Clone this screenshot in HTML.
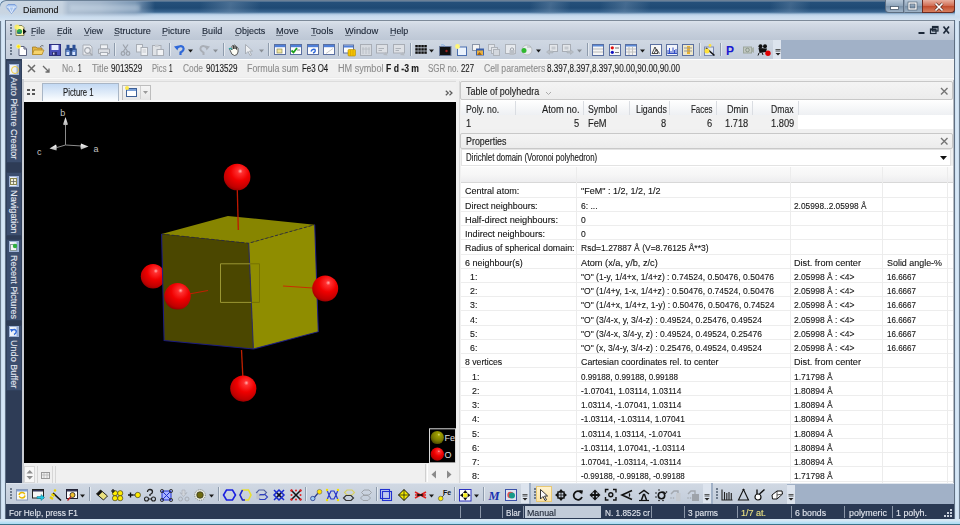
<!DOCTYPE html><html><head><meta charset="utf-8"><style>
html,body{margin:0;padding:0;width:960px;height:525px;overflow:hidden;background:#c3d5e8}
body{font-family:"Liberation Sans", sans-serif;position:relative}
.a{position:absolute}
.t{position:absolute;white-space:pre;line-height:1;transform-origin:0 0;-webkit-text-stroke:0.12px currentColor}
</style></head><body>
<div class="a" style="left:0px;top:0px;width:960px;height:525px;background:#cfe2f4"></div>
<div class="a" style="left:0px;top:20px;width:1px;height:505px;background:#6c7d8f"></div>
<div class="a" style="left:959px;top:20px;width:1px;height:505px;background:#6c7d8f"></div>
<div class="a" style="left:1px;top:20px;width:4px;height:500px;background:linear-gradient(90deg,#c4d8ec,#dcebf8 50%,#c8dcef)"></div>
<div class="a" style="left:955px;top:20px;width:4px;height:500px;background:linear-gradient(90deg,#c8dcef,#dcebf8 50%,#c4d8ec)"></div>
<div class="a" style="left:0;top:0;width:960px;height:21px;background:#cfe2f4;border-radius:7px 7px 0 0"></div><div class="a" style="left:0;top:0;width:955px;height:21px;background:linear-gradient(180deg,#5b6f84 0,#7d93aa 1px,#25507a 2px,#1f4a74 8px,#3a6690 12px,#9dbbd8 14px,#c9dcee 17px,#d8e6f3 20px);border-radius:6px 0 0 0"></div>
<div class="a" style="left:0;top:1px;width:160px;height:20px;background:linear-gradient(90deg,#c9d5e2 0,#c6d3e0 62px,#aebfd2 68px,#a3b6cb 100px,rgba(140,165,192,0.85) 135px,rgba(80,110,145,0) 155px);border-radius:6px 0 0 0"></div><div class="a" style="left:70px;top:5px;width:70px;height:6px;background:rgba(215,228,240,0.35);filter:blur(1.5px)"></div>
<div class="a" style="left:0;top:13px;width:960px;height:8px;background:linear-gradient(180deg,rgba(200,218,236,0) 0,#cadcee 4px,#d6e4f2 8px)"></div>
<div class="a" style="left:200px;top:2px;width:60px;height:12px;background:linear-gradient(100deg,rgba(120,150,180,0) 0,rgba(120,150,180,0.45) 50%,rgba(120,150,180,0) 100%)"></div>
<div class="a" style="left:530px;top:2px;width:40px;height:12px;background:linear-gradient(100deg,rgba(120,150,180,0) 0,rgba(120,150,180,0.4) 50%,rgba(120,150,180,0) 100%)"></div>
<div class="a" style="left:600px;top:2px;width:50px;height:12px;background:linear-gradient(100deg,rgba(120,150,180,0) 0,rgba(120,150,180,0.4) 50%,rgba(120,150,180,0) 100%)"></div>
<div class="a" style="left:770px;top:2px;width:40px;height:12px;background:linear-gradient(100deg,rgba(120,150,180,0) 0,rgba(120,150,180,0.35) 50%,rgba(120,150,180,0) 100%)"></div>

<div class="a" style="left:885px;top:0;width:19px;height:13px;border:1px solid #5c6e82;border-top:none;border-radius:0 0 0 4px;box-sizing:border-box;background:linear-gradient(180deg,#b9c9d9,#8ea4ba 50%,#7890a8 51%,#9fb4c8)"></div>
<div class="a" style="left:904px;top:0;width:18px;height:13px;border-bottom:1px solid #5c6e82;border-left:1px solid #8a9cb0;box-sizing:border-box;background:linear-gradient(180deg,#b9c9d9,#8ea4ba 50%,#7890a8 51%,#9fb4c8)"></div>
<div class="a" style="left:922px;top:0;width:33px;height:13px;border:1px solid #6b2a20;border-top:none;border-radius:0 0 4px 0;box-sizing:border-box;background:linear-gradient(180deg,#e8b0a0,#d06a50 50%,#c04a2c 51%,#d98060)"></div>
<svg class="a" style="left:885px;top:0" width="70" height="13">
<rect x="5.5" y="6.5" width="8" height="3" fill="#fff" stroke="#4a5a6c" stroke-width="0.8"/>
<rect x="24" y="3" width="7" height="6" fill="none" stroke="#4a5a6c" stroke-width="2.6"/>
<rect x="24" y="3" width="7" height="6" fill="none" stroke="#fff" stroke-width="1.3"/>
</svg>
<svg class="a" style="left:932px;top:2px" width="14" height="10"><path d="M3.5 1.5 L10.5 8.5 M10.5 1.5 L3.5 8.5" stroke="#5a2a20" stroke-width="3"/><path d="M3.5 1.5 L10.5 8.5 M10.5 1.5 L3.5 8.5" stroke="#fff" stroke-width="1.7"/></svg>

<svg class="a" style="left:5px;top:4px" width="13" height="10"><path d="M1 3 L3 0.5 L10 0.5 L12 3 L6.5 9.5 Z" fill="#a9c6f0" stroke="#6f94d6" stroke-width="0.8"/><path d="M1 3 H12 M4 3 L6.5 9 L9 3" stroke="#ffffff" stroke-width="0.6" fill="none"/></svg>
<div class="a" style="left:5px;top:20px;width:950px;height:499px;background:#5f6f82"></div>
<div class="a" style="left:6px;top:20px;width:948px;height:20px;background:linear-gradient(180deg,#7d8a99 0,#7d8a99 1px,#dce3ec 1px,#d2dae5 4px,#c6cfdc 60%,#bdc7d5 100%)"></div>
<div class="a" style="left:6px;top:40px;width:948px;height:19px;background:#a1b1c7"></div>
<div class="a" style="left:6px;top:40px;width:775px;height:19px;background:linear-gradient(180deg,#d0d8e3,#c2ccda)"></div>
<div class="a" style="left:773px;top:40px;width:8px;height:19px;background:#dde4ee"></div>
<div class="a" style="left:6px;top:59px;width:948px;height:20px;background:#f0f0f0"></div>
<div class="a" style="left:22px;top:59px;width:932px;height:1px;background:#ffffff"></div>
<div class="a" style="left:22px;top:77px;width:932px;height:4px;background:#ececec"></div>
<div class="a" style="left:22px;top:78px;width:932px;height:1px;background:#fafafa"></div>
<div class="a" style="left:6px;top:59px;width:16px;height:445px;background:#2e3c56"></div>
<div class="a" style="left:22px;top:79px;width:2px;height:404px;background:#c9cdd3"></div>
<div class="a" style="left:24px;top:81px;width:432px;height:21px;background:#f0f0f0"></div>
<div class="a" style="left:24px;top:81px;width:432px;height:1px;background:#dcdcdc"></div>
<div class="a" style="left:24px;top:100px;width:432px;height:2.4px;background:#f7f7f7"></div>
<div class="a" style="left:24px;top:102px;width:432px;height:361px;background:#000"></div>
<div class="a" style="left:24px;top:463px;width:432px;height:20px;background:#f0f0f0"></div>
<div class="a" style="left:456px;top:79px;width:4px;height:404px;background:#efefef"></div>
<div class="a" style="left:459px;top:81px;width:1px;height:402px;background:#d9d9d9"></div>
<div class="a" style="left:460px;top:79px;width:494px;height:404px;background:#f0f0f0"></div>
<div class="a" style="left:953px;top:80px;width:1px;height:403px;background:#b7bcc3"></div>
<div class="a" style="left:6px;top:482.5px;width:948px;height:1.5px;background:#dfe5ed"></div>
<div class="a" style="left:6px;top:484px;width:948px;height:20px;background:#a1b1c7"></div>
<div class="a" style="left:6px;top:484px;width:781px;height:20px;background:linear-gradient(180deg,#d0d8e3,#c2ccda)"></div>
<div class="a" style="left:787px;top:484.5px;width:8px;height:19px;background:#dde4ee"></div>
<div class="a" style="left:6px;top:504px;width:948px;height:15px;background:#2a3953"></div>
<div class="a" style="left:0px;top:518.8px;width:960px;height:6.2px;background:linear-gradient(180deg,#d8e7f3 0,#d4e6f4 2px,#bde3f6 3px,#aedcf2 4.8px,#3f7a92 5.2px,#2e6074 6.2px)"></div>
<div class="a" style="left:31.4px;top:35px;width:4px;height:1px;background:#5a6472;opacity:0.8"></div>
<div class="a" style="left:57px;top:35px;width:4.125px;height:1px;background:#5a6472;opacity:0.8"></div>
<div class="a" style="left:83.7px;top:35px;width:5.2250000000000005px;height:1px;background:#5a6472;opacity:0.8"></div>
<div class="a" style="left:114.3px;top:35px;width:4.485555555555557px;height:1px;background:#5a6472;opacity:0.8"></div>
<div class="a" style="left:162.3px;top:35px;width:4.462857142857143px;height:1px;background:#5a6472;opacity:0.8"></div>
<div class="a" style="left:202px;top:35px;width:4.466000000000001px;height:1px;background:#5a6472;opacity:0.8"></div>
<div class="a" style="left:234.7px;top:35px;width:4.761428571428572px;height:1px;background:#5a6472;opacity:0.8"></div>
<div class="a" style="left:276.3px;top:35px;width:6.242500000000001px;height:1px;background:#5a6472;opacity:0.8"></div>
<div class="a" style="left:311px;top:35px;width:4.906000000000001px;height:1px;background:#5a6472;opacity:0.8"></div>
<div class="a" style="left:345px;top:35px;width:6.105px;height:1px;background:#5a6472;opacity:0.8"></div>
<div class="a" style="left:390px;top:35px;width:5.032500000000001px;height:1px;background:#5a6472;opacity:0.8"></div>
<div class="a" style="left:10px;top:24px;width:2px;height:2px;background:#6e7b8c"></div>
<div class="a" style="left:10px;top:27px;width:2px;height:2px;background:#6e7b8c"></div>
<div class="a" style="left:10px;top:30px;width:2px;height:2px;background:#6e7b8c"></div>
<div class="a" style="left:10px;top:33px;width:2px;height:2px;background:#6e7b8c"></div>
<div class="a" style="left:10px;top:44px;width:2px;height:2px;background:#6e7b8c"></div>
<div class="a" style="left:10px;top:47px;width:2px;height:2px;background:#6e7b8c"></div>
<div class="a" style="left:10px;top:50px;width:2px;height:2px;background:#6e7b8c"></div>
<div class="a" style="left:10px;top:53px;width:2px;height:2px;background:#6e7b8c"></div>
<div class="a" style="left:10px;top:488px;width:2px;height:2px;background:#6e7b8c"></div>
<div class="a" style="left:10px;top:491px;width:2px;height:2px;background:#6e7b8c"></div>
<div class="a" style="left:10px;top:494px;width:2px;height:2px;background:#6e7b8c"></div>
<div class="a" style="left:10px;top:497px;width:2px;height:2px;background:#6e7b8c"></div>
<svg class="a" style="left:918px;top:25px" width="34" height="12">
<rect x="0.5" y="7" width="6" height="2" fill="#1c2838"/>
<rect x="12.5" y="4" width="5.5" height="4.5" fill="none" stroke="#1c2838" stroke-width="1.2"/><rect x="14.5" y="1.5" width="5.5" height="4.5" fill="none" stroke="#1c2838" stroke-width="1.2"/><rect x="12.5" y="4" width="5.5" height="1.5" fill="#1c2838"/><rect x="14.5" y="1.5" width="5.5" height="1.5" fill="#1c2838"/>
<path d="M25.5 1.5 L31 8.5 M31 1.5 L25.5 8.5" stroke="#1c2838" stroke-width="1.7"/></svg>
<svg class="a" style="left:26px;top:63px" width="30" height="12"><path d="M2 2 L9 9 M9 2 L2 9" stroke="#6a6a6a" stroke-width="1.5"/><path d="M17 3 L23 9 M19.5 9 H23 V5.5" stroke="#6a6a6a" stroke-width="1.3" fill="none"/></svg>
<div class="a" style="left:6px;top:59.5px;width:16px;height:103.5px;background:#3c4e6e;border:1px solid #30405c;box-sizing:border-box"></div>
<div class="a" style="left:8.5px;top:63.5px;width:10px;height:11px;background:linear-gradient(90deg,#f4f6fa,#e6ecf6 70%,#7d9ad0);border:1px solid #9fb3d6;box-sizing:border-box"></div>
<div class="a" style="left:10.5px;top:65.5px;width:6px;height:6px;border-radius:4px;border:1.3px solid #f0c830;box-sizing:content-box;opacity:0.9"></div>
<div class="a" style="left:6px;top:172px;width:16px;height:63.5px;background:#3c4e6e;border:1px solid #30405c;box-sizing:border-box"></div>
<div class="a" style="left:8.5px;top:176px;width:10px;height:11px;background:linear-gradient(90deg,#f4f6fa,#e6ecf6 70%,#7d9ad0);border:1px solid #9fb3d6;box-sizing:border-box"></div>
<svg class="a" style="left:10px;top:178px" width="7" height="7"><rect x="0.5" y="0.5" width="6" height="6" fill="#f2f0d8" stroke="#8a8650"/><path d="M3.5 1 V6 M1 3.5 H6" stroke="#555" stroke-width="0.7"/></svg>
<div class="a" style="left:6px;top:239px;width:16px;height:82px;background:#3c4e6e;border:1px solid #30405c;box-sizing:border-box"></div>
<div class="a" style="left:8.5px;top:241px;width:10px;height:11px;background:linear-gradient(90deg,#f4f6fa,#e6ecf6 70%,#7d9ad0);border:1px solid #9fb3d6;box-sizing:border-box"></div>
<svg class="a" style="left:10px;top:242.5px" width="8" height="8"><rect x="0.5" y="1.5" width="6" height="6" fill="#f4f4f4" stroke="#8a9a9a"/><circle cx="5" cy="3" r="2.2" fill="#30b040"/></svg>
<div class="a" style="left:6px;top:324.5px;width:16px;height:66.5px;background:#3c4e6e;border:1px solid #30405c;box-sizing:border-box"></div>
<div class="a" style="left:8.5px;top:326px;width:10px;height:11px;background:linear-gradient(90deg,#f4f6fa,#e6ecf6 70%,#7d9ad0);border:1px solid #9fb3d6;box-sizing:border-box"></div>
<svg class="a" style="left:10px;top:327.5px" width="8" height="8"><path d="M1.5 3 Q4 0.5 6 2.5 Q7 5 4 6.5" stroke="#2f68d8" stroke-width="1.4" fill="none"/><path d="M0 1 L3 1 L1.5 4.5 Z" fill="#2f68d8"/></svg>
<svg class="a" style="left:27px;top:89px" width="9" height="6"><rect x="0" y="0" width="3" height="2" fill="#555"/><rect x="5" y="0" width="3" height="2" fill="#555"/><rect x="0" y="4" width="3" height="2" fill="#555"/><rect x="5" y="4" width="3" height="2" fill="#555"/></svg>
<div class="a" style="left:42px;top:83px;width:76.5px;height:17.5px;background:linear-gradient(180deg,#c3d9f3,#dce9f8 45%,#f3f8fd 85%,#fbfdff);border:1px solid #a9b6c6;border-bottom:none;box-sizing:border-box"></div>
<div class="a" style="left:122px;top:84.5px;width:28.5px;height:15.5px;background:linear-gradient(180deg,#f6f6f6,#e6e6e6);border:1px solid #bdbdbd;border-bottom:none;box-sizing:border-box"></div>
<div class="a" style="left:139.5px;top:86px;width:1px;height:13px;background:#d0d0d0"></div>
<div class="a" style="left:126px;top:87.5px;width:10.5px;height:9.5px;background:linear-gradient(180deg,#7aa0d8 0,#7aa0d8 2px,#fff 2px,#fff);border:1px solid #3d5f96;box-sizing:border-box"></div>
<div class="a" style="left:124.5px;top:85.5px;width:4px;height:4px;border-radius:2px;background:#ffe84a"></div>
<svg class="a" style="left:142.5px;top:91px" width="6" height="4"><path d="M0 0 H5 L2.5 3 Z" fill="#9a9a9a"/></svg>
<svg class="a" style="left:445px;top:90px" width="9" height="6"><path d="M0.8 0.8 L3.3 3 L0.8 5.2 M4.5 0.8 L7 3 L4.5 5.2" stroke="#5a5a5a" stroke-width="1.2" fill="none"/></svg>
<div class="a" style="left:460px;top:81px;width:493px;height:19px;background:linear-gradient(180deg,#f4f4f4,#ececec);border:1px solid #c8c8c8;border-radius:2px;box-sizing:border-box"></div>
<svg class="a" style="left:546px;top:92px" width="5" height="3"><path d="M0 0 L2.5 2.5 L5 0" stroke="#aaa" fill="none"/></svg>
<svg class="a" style="left:940px;top:86.5px" width="9" height="9"><path d="M1 1 L7.5 7.5 M7.5 1 L1 7.5" stroke="#747474" stroke-width="1.4"/></svg>
<div class="a" style="left:461px;top:100px;width:492px;height:15px;background:linear-gradient(180deg,#ffffff,#eef0f3)"></div>
<div class="a" style="left:515.4px;top:101px;width:1px;height:14px;background:#dadde2"></div>
<div class="a" style="left:583px;top:101px;width:1px;height:14px;background:#dadde2"></div>
<div class="a" style="left:629px;top:101px;width:1px;height:14px;background:#dadde2"></div>
<div class="a" style="left:669.4px;top:101px;width:1px;height:14px;background:#dadde2"></div>
<div class="a" style="left:716px;top:101px;width:1px;height:14px;background:#dadde2"></div>
<div class="a" style="left:752px;top:101px;width:1px;height:14px;background:#dadde2"></div>
<div class="a" style="left:797.6px;top:101px;width:1px;height:14px;background:#dadde2"></div>
<div class="a" style="left:461px;top:114.5px;width:337px;height:1px;background:#e0e2e6"></div>
<div class="a" style="left:461px;top:115px;width:492px;height:14px;background:#ffffff"></div>
<div class="a" style="left:461px;top:115px;width:337px;height:14px;background:#f1f1f1"></div>
<div class="a" style="left:461px;top:129px;width:492px;height:3px;background:#f0f0f0"></div>
<div class="a" style="left:460px;top:133px;width:493px;height:15.5px;background:linear-gradient(180deg,#f4f4f4,#ececec);border:1px solid #c8c8c8;border-radius:2px;box-sizing:border-box"></div>
<svg class="a" style="left:940px;top:137px" width="9" height="9"><path d="M1 1 L7.5 7.5 M7.5 1 L1 7.5" stroke="#747474" stroke-width="1.4"/></svg>
<div class="a" style="left:461px;top:149px;width:490px;height:17px;background:#ffffff;border:1px solid #e3e3e3;box-sizing:border-box"></div>
<svg class="a" style="left:940px;top:156px" width="8" height="5"><path d="M0 0 H7 L3.5 4 Z" fill="#111"/></svg>
<div class="a" style="left:461px;top:166px;width:492px;height:316.6px;background:#ffffff"></div>
<div class="a" style="left:461px;top:167px;width:492px;height:16px;background:linear-gradient(180deg,#fafafa 0,#f6f6f6 50%,#ececee 100%)"></div>
<div class="a" style="left:461px;top:182px;width:492px;height:1px;background:#d8d8d8"></div>
<div class="a" style="left:461px;top:197px;width:492px;height:1px;background:#ededed"></div>
<div class="a" style="left:461px;top:211px;width:492px;height:1px;background:#ededed"></div>
<div class="a" style="left:461px;top:225px;width:492px;height:1px;background:#ededed"></div>
<div class="a" style="left:461px;top:239px;width:492px;height:1px;background:#ededed"></div>
<div class="a" style="left:461px;top:254px;width:492px;height:1px;background:#ededed"></div>
<div class="a" style="left:461px;top:268px;width:492px;height:1px;background:#ededed"></div>
<div class="a" style="left:461px;top:282px;width:492px;height:1px;background:#ededed"></div>
<div class="a" style="left:461px;top:296px;width:492px;height:1px;background:#ededed"></div>
<div class="a" style="left:461px;top:310px;width:492px;height:1px;background:#ededed"></div>
<div class="a" style="left:461px;top:325px;width:492px;height:1px;background:#ededed"></div>
<div class="a" style="left:461px;top:339px;width:492px;height:1px;background:#ededed"></div>
<div class="a" style="left:461px;top:353px;width:492px;height:1px;background:#ededed"></div>
<div class="a" style="left:461px;top:367px;width:492px;height:1px;background:#ededed"></div>
<div class="a" style="left:461px;top:381px;width:492px;height:1px;background:#ededed"></div>
<div class="a" style="left:461px;top:395px;width:492px;height:1px;background:#ededed"></div>
<div class="a" style="left:461px;top:410px;width:492px;height:1px;background:#ededed"></div>
<div class="a" style="left:461px;top:424px;width:492px;height:1px;background:#ededed"></div>
<div class="a" style="left:461px;top:438px;width:492px;height:1px;background:#ededed"></div>
<div class="a" style="left:461px;top:452px;width:492px;height:1px;background:#ededed"></div>
<div class="a" style="left:461px;top:466px;width:492px;height:1px;background:#ededed"></div>
<div class="a" style="left:461px;top:481px;width:492px;height:1px;background:#ededed"></div>
<div class="a" style="left:575.5px;top:167px;width:1px;height:315.6px;background:#ececec"></div>
<div class="a" style="left:790px;top:167px;width:1px;height:315.6px;background:#ececec"></div>
<div class="a" style="left:882px;top:167px;width:1px;height:315.6px;background:#ececec"></div>
<div class="a" style="left:946.5px;top:167px;width:1px;height:315.6px;background:#ececec"></div>
<div class="a" style="left:460.2px;top:506px;width:1px;height:12px;background:#8a96a8"></div>
<div class="a" style="left:480.2px;top:506px;width:1px;height:12px;background:#8a96a8"></div>
<div class="a" style="left:501.9px;top:506px;width:1px;height:12px;background:#8a96a8"></div>
<div class="a" style="left:523.3px;top:506px;width:1px;height:12px;background:#8a96a8"></div>
<div class="a" style="left:650.8px;top:506px;width:1px;height:12px;background:#8a96a8"></div>
<div class="a" style="left:684.4px;top:506px;width:1px;height:12px;background:#8a96a8"></div>
<div class="a" style="left:736.7px;top:506px;width:1px;height:12px;background:#8a96a8"></div>
<div class="a" style="left:790.8px;top:506px;width:1px;height:12px;background:#8a96a8"></div>
<div class="a" style="left:844.4px;top:506px;width:1px;height:12px;background:#8a96a8"></div>
<div class="a" style="left:892.3px;top:506px;width:1px;height:12px;background:#8a96a8"></div>
<div class="a" style="left:525px;top:506px;width:75.5px;height:12px;background:#c2ccd9"></div>
<svg class="a" style="left:943px;top:508px" width="10" height="10"><g fill="#c8d0dc"><rect x="7" y="1" width="2" height="2"/><rect x="4" y="4" width="2" height="2"/><rect x="7" y="4" width="2" height="2"/><rect x="1" y="7" width="2" height="2"/><rect x="4" y="7" width="2" height="2"/><rect x="7" y="7" width="2" height="2"/></g></svg>
<svg class="a" style="left:24px;top:102px" width="432" height="361" viewBox="24 102 432 361"><defs>
<radialGradient id="rs" cx="0.58" cy="0.32" r="0.75" fx="0.62" fy="0.28">
<stop offset="0" stop-color="#ffb0b0"/><stop offset="0.12" stop-color="#ff3030"/><stop offset="0.45" stop-color="#f00000"/><stop offset="0.8" stop-color="#c00000"/><stop offset="1" stop-color="#800000"/></radialGradient>
<radialGradient id="fs" cx="0.58" cy="0.32" r="0.75" fx="0.62" fy="0.28">
<stop offset="0" stop-color="#e0e080"/><stop offset="0.15" stop-color="#a0a000"/><stop offset="0.6" stop-color="#7a7a00"/><stop offset="1" stop-color="#3e3e00"/></radialGradient>
</defs><defs><linearGradient id="ag" x1="0" y1="0" x2="0" y2="1"><stop offset="0" stop-color="#ffffff"/><stop offset="1" stop-color="#b0b0b0"/></linearGradient></defs><g stroke="#8c8c8c" stroke-width="1" fill="none"><path d="M65.5 145 V124"/><path d="M65.5 145 L82 146"/><path d="M65.5 145 L57 147.5"/></g><path d="M65.5 117 L68 124.5 Q65.5 125.8 63 124.5 Z" fill="url(#ag)"/><path d="M88.5 146.5 L81 143.5 Q80 146.5 81 149.5 Z" fill="url(#ag)"/><path d="M49.5 148.5 L56 144.5 Q57.5 147 56.5 150.5 Z" fill="url(#ag)"/><g font-family="Liberation Sans" font-size="9" fill="#c4c4c4"><text x="60.3" y="116.3">b</text><text x="93.5" y="152">a</text><text x="37" y="155">c</text></g><circle cx="153" cy="276.3" r="12.2" fill="url(#rs)"/><polygon points="161.6,234.1 227.9,215.9 314.7,224.7 248.7,243.2" fill="#878500" /><polygon points="161.6,234.1 248.7,243.2 253.4,349 164.1,340.5" fill="#4b4700" /><polygon points="248.7,243.2 314.7,224.7 318.3,331.7 253.4,349" fill="#8f8d00" /><g stroke="#28284a" stroke-width="1" fill="none" opacity="0.85"><path d="M161.6 234.1 L248.7 243.2 L314.7 224.7" stroke-dasharray="3 2"/></g><g stroke="#1a1a8a" stroke-width="1.1" fill="none" opacity="0.9"><path d="M161.6 234.1 L164.1 340.5 L253.4 349 L318.3 331.7 L314.7 224.7"/><path d="M248.7 243.2 L253.4 349" stroke="#2a2a6a"/></g><path d="M237.3 190 L238.3 230" stroke="#c01800" stroke-width="1.3"/><circle cx="237.1" cy="177" r="13.3" fill="url(#rs)"/><path d="M250.3 263.8 H220.5 V302.4 H251.2" fill="none" stroke="#9a9632" stroke-width="1"/><path d="M250.3 263.8 H259.5 V302.4 H251.2" fill="none" stroke="#767200" stroke-width="1"/><path d="M189 294 L208 290.5" stroke="#c02000" stroke-width="1.2"/><path d="M283 286 L313 288" stroke="#c83000" stroke-width="1.2"/><path d="M241.5 350 L242.8 376" stroke="#c02000" stroke-width="1.3"/><circle cx="177.5" cy="296.3" r="13.2" fill="url(#rs)"/><circle cx="325.2" cy="288.5" r="13" fill="url(#rs)"/><circle cx="243.3" cy="388.6" r="13.1" fill="url(#rs)"/><rect x="429.5" y="428.8" width="26" height="34" fill="#000" stroke="#d8d8d8" stroke-width="1"/><circle cx="437.3" cy="437.5" r="6.6" fill="url(#fs)"/><circle cx="437.3" cy="454.2" r="6.6" fill="url(#rs)"/><g font-family="Liberation Sans" font-size="9" fill="#e0e0e0"><text x="444.5" y="441">Fe</text><text x="444.5" y="458">O</text></g></svg>
<div class="a" style="left:24px;top:463px;width:401px;height:19.5px;background:#f0f0f0"></div>
<div class="a" style="left:24px;top:466px;width:11px;height:16.5px;background:#f8f8f8;border:1px solid #d8d8d8;box-sizing:border-box"></div>
<svg class="a" style="left:26px;top:469px" width="8" height="12"><path d="M0.5 4.5 L3.75 1 L7 4.5 Z M0.5 7 L3.75 10.5 L7 7 Z" fill="#8e8e8e"/></svg>
<div class="a" style="left:37px;top:466px;width:16px;height:16.5px;background:#f0f0f0;border-left:1px solid #d6d6d6;border-right:1px solid #d6d6d6;box-sizing:border-box"></div>
<svg class="a" style="left:41px;top:472px" width="9" height="7"><rect x="0.5" y="0.5" width="8" height="6" fill="none" stroke="#9a9a9a"/><path d="M1 3 H8 M3 1 V6 M6 1 V6" stroke="#b0b0b0" stroke-width="0.7"/></svg>
<div class="a" style="left:55px;top:466px;width:1px;height:16.5px;background:#d6d6d6"></div>
<div class="a" style="left:424.7px;top:464px;width:1px;height:18px;background:#d0d0d0"></div>
<div class="a" style="left:427.3px;top:464px;width:1px;height:18px;background:#ffffff"></div>
<svg class="a" style="left:431px;top:470px" width="22" height="9"><path d="M5 0.5 V8.5 L0.5 4.5 Z" fill="#8a8a8a"/><path d="M16 0.5 V8.5 L20.5 4.5 Z" fill="#8a8a8a"/></svg>
<svg class="a" style="left:15.5px;top:43.5px;overflow:visible" width="13" height="13" viewBox="0 0 13 13"><path d="M3 2.5 H8 L10.5 5 V11.5 H3 Z" fill="#fff" stroke="#5c6380"/><path d="M8 2.5 V5 H10.5" fill="none" stroke="#5c6380"/><circle cx="2.5" cy="2.5" r="2.3" fill="#fff27a"/><circle cx="2.5" cy="2.5" r="1.2" fill="#ffe100"/></svg>
<svg class="a" style="left:32px;top:43.5px;overflow:visible" width="13" height="13" viewBox="0 0 13 13"><path d="M0.5 3 H4 L5 4 H10 V10.5 H0.5 Z" fill="#e3b542" stroke="#a37a1f" stroke-width="0.8"/><path d="M2 6 H12 L10 10.5 H0.5 Z" fill="#f6d36b" stroke="#b38a2a" stroke-width="0.8"/><path d="M8 3 Q10 0.5 11.5 2" stroke="#555" fill="none" stroke-width="0.8"/></svg>
<svg class="a" style="left:49px;top:43.5px;overflow:visible" width="13" height="13" viewBox="0 0 13 13"><rect x="0.5" y="0.5" width="11" height="11" fill="#4a4fb8" stroke="#2c2f80"/><rect x="2.5" y="1" width="7" height="5" fill="#e8ecff"/><rect x="3" y="8" width="5" height="3.5" fill="#2d2f70"/><rect x="4" y="8.6" width="1.5" height="2" fill="#d0d0f0"/></svg>
<svg class="a" style="left:65px;top:43.5px;overflow:visible" width="13" height="13" viewBox="0 0 13 13"><rect x="0.8" y="5" width="4.6" height="6.5" fill="#6b8fd0" stroke="#23407a" stroke-width="0.9"/><rect x="6.6" y="5" width="4.6" height="6.5" fill="#6b8fd0" stroke="#23407a" stroke-width="0.9"/><rect x="1.5" y="0.8" width="3" height="5" fill="#2b4f96"/><rect x="7.5" y="0.8" width="3" height="5" fill="#2b4f96"/><rect x="4.5" y="4" width="3" height="3" fill="#23407a"/><rect x="1.5" y="8" width="2.5" height="3" fill="#d8e6ff"/><rect x="7.5" y="8" width="2.5" height="3" fill="#d8e6ff"/></svg>
<svg class="a" style="left:82px;top:43.5px;overflow:visible" width="13" height="13" viewBox="0 0 13 13"><path d="M1 1 H8 L10 3 V11 H1 Z" fill="#eceef2" stroke="#a8adb5"/><circle cx="5.5" cy="6.5" r="2.8" fill="none" stroke="#a3a8b0" stroke-width="1.2"/><path d="M7.5 8.5 L10.5 11.5" stroke="#a3a8b0" stroke-width="1.4"/></svg>
<svg class="a" style="left:98px;top:43.5px;overflow:visible" width="13" height="13" viewBox="0 0 13 13"><rect x="2.5" y="0.8" width="7" height="4" fill="#f0f2f5" stroke="#a8adb5"/><path d="M0.5 5 H11.5 V9.5 H0.5 Z" fill="#dcdfe4" stroke="#a3a8b0"/><rect x="2.5" y="8.5" width="7" height="3" fill="#f0f2f5" stroke="#a8adb5"/></svg>
<svg class="a" style="left:119.5px;top:43.5px;overflow:visible" width="13" height="13" viewBox="0 0 13 13"><path d="M3 0.5 L8 8 M8 0.5 L3 8" stroke="#9ca2ab" stroke-width="1.2"/><circle cx="3" cy="9.5" r="1.8" fill="none" stroke="#9ca2ab" stroke-width="1.2"/><circle cx="8" cy="9.5" r="1.8" fill="none" stroke="#9ca2ab" stroke-width="1.2"/></svg>
<svg class="a" style="left:135.5px;top:43.5px;overflow:visible" width="13" height="13" viewBox="0 0 13 13"><rect x="0.5" y="0.5" width="6" height="7.5" fill="#eef0f3" stroke="#a8adb5"/><rect x="5" y="3.5" width="6.5" height="8" fill="#eef0f3" stroke="#a8adb5"/><path d="M6.5 6 H10 M6.5 8 H10" stroke="#b8bcc2" stroke-width="0.7"/></svg>
<svg class="a" style="left:152px;top:43.5px;overflow:visible" width="13" height="13" viewBox="0 0 13 13"><rect x="0.5" y="1.5" width="8.5" height="10" fill="#dfe2e6" stroke="#a8adb5"/><rect x="3" y="0.5" width="3.5" height="2.5" fill="#c8ccd2"/><rect x="5" y="5.5" width="6.5" height="6" fill="#f2f3f5" stroke="#a8adb5"/></svg>
<svg class="a" style="left:174px;top:43.5px;overflow:visible" width="13" height="13" viewBox="0 0 13 13"><path d="M2.5 4.5 Q6 0.5 9 3 Q11 6 6.5 8.5 V11" stroke="#2f68d8" stroke-width="2.2" fill="none"/><path d="M0 2.5 L4.5 1.5 L3.5 6.5 Z" fill="#2f68d8"/></svg>
<svg class="a" style="left:198px;top:43.5px;overflow:visible" width="13" height="13" viewBox="0 0 13 13"><path d="M9.5 4.5 Q6 0.5 3 3 Q1 6 5.5 8.5 V11" stroke="#a9aeb6" stroke-width="2" fill="none"/><path d="M12 2.5 L7.5 1.5 L8.5 6.5 Z" fill="#a9aeb6"/></svg>
<svg class="a" style="left:227.5px;top:43.5px;overflow:visible" width="13" height="13" viewBox="0 0 13 13"><path d="M2 6 Q1 4 2.5 4.5 L4 6 V2 Q5 1 5.5 2 V5 V1.5 Q6.5 0.5 7 1.5 V5 V2 Q8 1.5 8.5 2.5 V5.5 V3.5 Q9.5 3 10 4 V8 Q9.5 11.5 6.5 11.5 Q3.5 11.5 2 6 Z" fill="#fdfdf5" stroke="#333" stroke-width="0.8"/><path d="M1 5 Q2.5 3.5 4 5.5" stroke="#2aa5a0" stroke-width="1.2" fill="none"/></svg>
<svg class="a" style="left:244px;top:43.5px;overflow:visible" width="13" height="13" viewBox="0 0 13 13"><path d="M1.5 0.5 V10 L4 7.5 L6 11.5 L7.5 10.8 L5.6 7 H8.6 Z" fill="#eef0f3" stroke="#a3a8b0" stroke-width="0.9"/></svg>
<svg class="a" style="left:273.5px;top:43.5px;overflow:visible" width="13" height="13" viewBox="0 0 13 13"><rect x="0.5" y="0.5" width="11" height="10" fill="#fdfdfd" stroke="#5a6fa0"/><rect x="1" y="1" width="10" height="2.2" fill="#4f7fd8"/><rect x="3" y="5" width="5" height="4" fill="#f2e7a0" stroke="#8c8a5a" stroke-width="0.7"/></svg>
<svg class="a" style="left:290px;top:43.5px;overflow:visible" width="13" height="13" viewBox="0 0 13 13"><rect x="0.5" y="0.5" width="11" height="10" fill="#fdfdfd" stroke="#5a6fa0"/><rect x="1" y="1" width="10" height="2.2" fill="#4f7fd8"/><path d="M1.5 6.5 L3.5 8.5 L7 4" stroke="#1aa01a" stroke-width="1.8" fill="none"/><path d="M7 6 H10" stroke="#888"/></svg>
<svg class="a" style="left:306.5px;top:43.5px;overflow:visible" width="13" height="13" viewBox="0 0 13 13"><rect x="0.5" y="0.5" width="11" height="10" fill="#fdfdfd" stroke="#5a6fa0"/><rect x="1" y="1" width="10" height="2.2" fill="#4f7fd8"/><path d="M4 7.5 Q5 4.5 8 5.5 Q9 8 6 9" stroke="#2f68d8" stroke-width="1.4" fill="none"/></svg>
<svg class="a" style="left:323px;top:43.5px;overflow:visible" width="13" height="13" viewBox="0 0 13 13"><rect x="0.5" y="0.5" width="11" height="10" fill="#fdfdfd" stroke="#5a6fa0"/><rect x="1" y="1" width="10" height="2.2" fill="#4f7fd8"/><path d="M3 9.5 L10 4.5" stroke="#bbb" stroke-width="0.8"/></svg>
<svg class="a" style="left:343px;top:43.5px;overflow:visible" width="13" height="13" viewBox="0 0 13 13"><rect x="0.5" y="1" width="10" height="8" fill="#fdfdfd" stroke="#5a6fa0"/><rect x="1" y="1.5" width="9" height="2" fill="#4f7fd8"/><rect x="5" y="5.5" width="7.5" height="6.5" rx="1" fill="#f2c200" stroke="#b08a00" stroke-width="0.6"/><path d="M7.5 6 V12 M10 6 V12" stroke="#d49b00" stroke-width="0.6"/></svg>
<svg class="a" style="left:360px;top:43.5px;overflow:visible" width="13" height="13" viewBox="0 0 13 13"><rect x="0.5" y="0.5" width="11" height="11" fill="#d6dae0" stroke="#a8adb5"/><path d="M3 3 V10 M6 3 V10 M9 3 V10 M2 5 H10" stroke="#b5bac1" stroke-width="0.8"/></svg>
<svg class="a" style="left:376px;top:43.5px;overflow:visible" width="13" height="13" viewBox="0 0 13 13"><rect x="0.5" y="0.5" width="11" height="8.5" fill="#dde0e5" stroke="#a8adb5"/><path d="M2.5 4.5 H8 M2.5 6.5 H6" stroke="#aeb3ba"/><path d="M7 11 L10 8 L11.5 11.5 Z" fill="#b5bac1"/></svg>
<svg class="a" style="left:393px;top:43.5px;overflow:visible" width="13" height="13" viewBox="0 0 13 13"><rect x="0.5" y="0.5" width="11" height="8.5" fill="#dde0e5" stroke="#a8adb5"/><path d="M2.5 4.5 H8 M2.5 6.5 H6" stroke="#aeb3ba"/><path d="M7 11 L10 8 L11.5 11.5 Z" fill="#b5bac1"/></svg>
<svg class="a" style="left:414.5px;top:43.5px;overflow:visible" width="13" height="13" viewBox="0 0 13 13"><g fill="#111"><rect x="0.3" y="1.0" width="2.5" height="2.4"/><rect x="0.3" y="4.2" width="2.5" height="2.4"/><rect x="0.3" y="7.4" width="2.5" height="2.4"/><rect x="3.3" y="1.0" width="2.5" height="2.4"/><rect x="3.3" y="4.2" width="2.5" height="2.4"/><rect x="3.3" y="7.4" width="2.5" height="2.4"/><rect x="6.3" y="1.0" width="2.5" height="2.4"/><rect x="6.3" y="4.2" width="2.5" height="2.4"/><rect x="6.3" y="7.4" width="2.5" height="2.4"/><rect x="9.3" y="1.0" width="2.5" height="2.4"/><rect x="9.3" y="4.2" width="2.5" height="2.4"/><rect x="9.3" y="7.4" width="2.5" height="2.4"/></g></svg>
<svg class="a" style="left:438.5px;top:43.5px;overflow:visible" width="13" height="13" viewBox="0 0 13 13"><rect x="0.5" y="2.5" width="11.5" height="9" fill="#111" stroke="#6a7a9a"/><path d="M2 1 Q4 0 6 2" stroke="#8ab0e0" fill="none"/><circle cx="7.5" cy="7" r="1.2" fill="#a02020"/></svg>
<svg class="a" style="left:455px;top:43.5px;overflow:visible" width="13" height="13" viewBox="0 0 13 13"><rect x="2.5" y="3" width="9" height="8.5" fill="#eaf2fc" stroke="#4a6fb0"/><circle cx="2.5" cy="2.5" r="2.4" fill="#fff57a"/></svg>
<svg class="a" style="left:471.5px;top:43.5px;overflow:visible" width="13" height="13" viewBox="0 0 13 13"><rect x="0.5" y="0.5" width="7" height="6" fill="#f3f3f3" stroke="#8a95a8"/><rect x="4" y="4.5" width="8" height="7" fill="#3a5fa8"/><rect x="5" y="6.5" width="6" height="4.5" fill="#e8b040"/><path d="M5 11 L7.5 8 L10 11" fill="#a06010"/></svg>
<svg class="a" style="left:488px;top:43.5px;overflow:visible" width="13" height="13" viewBox="0 0 13 13"><rect x="0.5" y="0.5" width="6" height="6" fill="#e2e5ea" stroke="#aeb3ba"/><rect x="3.5" y="3.5" width="6" height="6" fill="#e2e5ea" stroke="#aeb3ba"/><rect x="5.5" y="5.5" width="6" height="6" fill="#d4d8de" stroke="#aeb3ba"/></svg>
<svg class="a" style="left:505px;top:43.5px;overflow:visible" width="13" height="13" viewBox="0 0 13 13"><rect x="0.5" y="0.5" width="10" height="9" fill="#e6e9ed" stroke="#aeb3ba"/><rect x="4.5" y="6" width="5" height="5" fill="#b9bec5"/><path d="M5.5 6 V4.5 Q7 3 8.5 4.5 V6" stroke="#9ea3ab" fill="none"/></svg>
<svg class="a" style="left:521px;top:43.5px;overflow:visible" width="13" height="13" viewBox="0 0 13 13"><circle cx="6" cy="6" r="5" fill="#e9ecef" stroke="#b8bcc2"/><circle cx="3" cy="6.5" r="2.5" fill="#2fb82f"/><path d="M6 3 H10" stroke="#9aa" stroke-width="0.8"/></svg>
<svg class="a" style="left:546px;top:43.5px;overflow:visible" width="13" height="13" viewBox="0 0 13 13"><rect x="3.5" y="0.5" width="8" height="7" fill="#e3e6ea" stroke="#a8adb5"/><rect x="5.5" y="2.5" width="4" height="3" fill="#c5c9cf"/><path d="M0.5 8 L3.5 5.5 V7 H7 V9 H3.5 V10.5 Z" fill="#b9bec5" stroke="#a3a8b0" stroke-width="0.5"/></svg>
<svg class="a" style="left:562px;top:43.5px;overflow:visible" width="13" height="13" viewBox="0 0 13 13"><rect x="0.5" y="0.5" width="8" height="7" fill="#e3e6ea" stroke="#a8adb5"/><rect x="2.5" y="2.5" width="4" height="3" fill="#c5c9cf"/><path d="M11.5 8 L8.5 5.5 V7 H5 V9 H8.5 V10.5 Z" fill="#b9bec5" stroke="#a3a8b0" stroke-width="0.5"/></svg>
<svg class="a" style="left:591.5px;top:43.5px;overflow:visible" width="13" height="13" viewBox="0 0 13 13"><rect x="0.5" y="0.5" width="11" height="11" fill="#f5f5f5" stroke="#5a6fa0"/><rect x="1" y="1" width="10" height="1.5" fill="#5b8ad8"/><path d="M1 5 H11 M1 8 H11" stroke="#bbb"/></svg>
<svg class="a" style="left:608.5px;top:43.5px;overflow:visible" width="13" height="13" viewBox="0 0 13 13"><rect x="0.5" y="0.5" width="11" height="11" fill="#f8f8f8" stroke="#5a6fa0"/><circle cx="3.3" cy="3.8" r="1.6" fill="#e01010"/><circle cx="3.3" cy="8.3" r="1.6" fill="#1010c0"/><path d="M6 4 H10 M6 8.5 H10" stroke="#777"/></svg>
<svg class="a" style="left:624.5px;top:43.5px;overflow:visible" width="13" height="13" viewBox="0 0 13 13"><rect x="0.5" y="0.5" width="11" height="11" fill="#f3f3f3" stroke="#5a6fa0"/><rect x="1" y="1" width="10" height="1.5" fill="#5b8ad8"/><path d="M1 5 H11 M1 8 H11 M4 3 V11 M7.5 3 V11" stroke="#c0c0c0"/></svg>
<svg class="a" style="left:649.5px;top:43.5px;overflow:visible" width="13" height="13" viewBox="0 0 13 13"><rect x="0.5" y="0.5" width="11" height="11" fill="#f7f7f7" stroke="#5a6fa0"/><path d="M2 9.5 L5 3 L8 9.5 Z M4 9.5 L6.5 5 L9.5 9.5" stroke="#222" fill="none" stroke-width="0.8"/></svg>
<svg class="a" style="left:666px;top:43.5px;overflow:visible" width="13" height="13" viewBox="0 0 13 13"><rect x="0.5" y="0.5" width="11" height="11" fill="#f2f5fb" stroke="#5a6fa0"/><path d="M2 9.5 V6 M3.5 9.5 V4 M5 9.5 V7 M7 9.5 V3.5 M8.5 9.5 V6 M10 9.5 V5 M1.5 9.5 H11" stroke="#2040c0" stroke-width="0.9"/></svg>
<svg class="a" style="left:682px;top:43.5px;overflow:visible" width="13" height="13" viewBox="0 0 13 13"><rect x="0.5" y="0.5" width="11" height="11" fill="#eee7c8" stroke="#5a6fa0"/><rect x="5" y="2" width="3" height="8" fill="#e8b030"/><path d="M2 4 H10 M2 7 H10" stroke="#999"/></svg>
<svg class="a" style="left:703.5px;top:43.5px;overflow:visible" width="13" height="13" viewBox="0 0 13 13"><rect x="0.5" y="3" width="9" height="8.5" fill="#dfe6f2" stroke="#7c8ab0"/><path d="M2 4 L10.5 11.5" stroke="#111" stroke-width="1.6"/><circle cx="3" cy="7" r="2.5" fill="#ffe13a"/><circle cx="6" cy="1.5" r="1.4" fill="#ffe13a"/></svg>
<svg class="a" style="left:725px;top:43.5px;overflow:visible" width="13" height="13" viewBox="0 0 13 13"><text x="1" y="10.5" font-family="Liberation Sans" font-weight="bold" font-size="12" fill="#1a1ad0">P</text></svg>
<svg class="a" style="left:742.5px;top:43.5px;overflow:visible" width="13" height="13" viewBox="0 0 13 13"><rect x="0.5" y="3" width="8" height="6" fill="#c3c9c3" stroke="#9ca69c"/><circle cx="4.5" cy="6" r="1.8" fill="none" stroke="#8a968a"/><path d="M8.5 4.5 L11 3 V9 L8.5 7.5 Z" fill="#a8b0a8"/></svg>
<svg class="a" style="left:757.5px;top:43.5px;overflow:visible" width="13" height="13" viewBox="0 0 13 13"><path d="M0.5 4 L9 4.5 L8 8 L1.5 9 Z" fill="#111"/><circle cx="2.5" cy="2.3" r="2" fill="#111"/><circle cx="7" cy="2.3" r="2" fill="#111"/><path d="M1 9 L0 11.5 M4 8.5 L5 11" stroke="#111" stroke-width="1"/><circle cx="10" cy="9.3" r="2.7" fill="#e00000"/></svg>
<div class="a" style="left:114.3px;top:43px;width:1px;height:13px;background:#8e9bac"></div>
<div class="a" style="left:115.3px;top:43px;width:1px;height:13px;background:#eef2f7;opacity:0.7"></div>
<div class="a" style="left:168.5px;top:43px;width:1px;height:13px;background:#8e9bac"></div>
<div class="a" style="left:169.5px;top:43px;width:1px;height:13px;background:#eef2f7;opacity:0.7"></div>
<div class="a" style="left:222.6px;top:43px;width:1px;height:13px;background:#8e9bac"></div>
<div class="a" style="left:223.6px;top:43px;width:1px;height:13px;background:#eef2f7;opacity:0.7"></div>
<div class="a" style="left:268.1px;top:43px;width:1px;height:13px;background:#8e9bac"></div>
<div class="a" style="left:269.1px;top:43px;width:1px;height:13px;background:#eef2f7;opacity:0.7"></div>
<div class="a" style="left:338.3px;top:43px;width:1px;height:13px;background:#8e9bac"></div>
<div class="a" style="left:339.3px;top:43px;width:1px;height:13px;background:#eef2f7;opacity:0.7"></div>
<div class="a" style="left:409.7px;top:43px;width:1px;height:13px;background:#8e9bac"></div>
<div class="a" style="left:410.7px;top:43px;width:1px;height:13px;background:#eef2f7;opacity:0.7"></div>
<div class="a" style="left:586.6px;top:43px;width:1px;height:13px;background:#8e9bac"></div>
<div class="a" style="left:587.6px;top:43px;width:1px;height:13px;background:#eef2f7;opacity:0.7"></div>
<div class="a" style="left:698.6px;top:43px;width:1px;height:13px;background:#8e9bac"></div>
<div class="a" style="left:699.6px;top:43px;width:1px;height:13px;background:#eef2f7;opacity:0.7"></div>
<div class="a" style="left:719.6px;top:43px;width:1px;height:13px;background:#8e9bac"></div>
<div class="a" style="left:720.6px;top:43px;width:1px;height:13px;background:#eef2f7;opacity:0.7"></div>
<svg class="a" style="left:188.25px;top:49px;overflow:visible" width="6" height="4" viewBox="0 0 6 4"><path d="M0 0.5 H5 L2.5 3.5 Z" fill="#1a1a1a"/></svg>
<svg class="a" style="left:213.0px;top:49px;overflow:visible" width="6" height="4" viewBox="0 0 6 4"><path d="M0 0.5 H5 L2.5 3.5 Z" fill="#8a8f96"/></svg>
<svg class="a" style="left:258.75px;top:49px;overflow:visible" width="6" height="4" viewBox="0 0 6 4"><path d="M0 0.5 H5 L2.5 3.5 Z" fill="#8a8f96"/></svg>
<svg class="a" style="left:429.1px;top:49px;overflow:visible" width="6" height="4" viewBox="0 0 6 4"><path d="M0 0.5 H5 L2.5 3.5 Z" fill="#1a1a1a"/></svg>
<svg class="a" style="left:536.25px;top:49px;overflow:visible" width="6" height="4" viewBox="0 0 6 4"><path d="M0 0.5 H5 L2.5 3.5 Z" fill="#1a1a1a"/></svg>
<svg class="a" style="left:577.25px;top:49px;overflow:visible" width="6" height="4" viewBox="0 0 6 4"><path d="M0 0.5 H5 L2.5 3.5 Z" fill="#8a8f96"/></svg>
<svg class="a" style="left:639.75px;top:49px;overflow:visible" width="6" height="4" viewBox="0 0 6 4"><path d="M0 0.5 H5 L2.5 3.5 Z" fill="#1a1a1a"/></svg>
<svg class="a" style="left:774.5px;top:49px;overflow:visible" width="6" height="7" viewBox="0 0 6 7"><path d="M0.5 0.5 H5.5 M0.5 2 H5.5" stroke="#333" stroke-width="0.8"/><path d="M0.5 4 H5.5 L3 6.5 Z" fill="#222"/></svg>
<div class="a" style="left:89.25px;top:487px;width:1px;height:14px;background:#8e9bac"></div>
<div class="a" style="left:90.25px;top:487px;width:1px;height:14px;background:#eef2f7;opacity:0.7"></div>
<div class="a" style="left:217.5px;top:487px;width:1px;height:14px;background:#8e9bac"></div>
<div class="a" style="left:218.5px;top:487px;width:1px;height:14px;background:#eef2f7;opacity:0.7"></div>
<div class="a" style="left:304.6px;top:487px;width:1px;height:14px;background:#8e9bac"></div>
<div class="a" style="left:305.6px;top:487px;width:1px;height:14px;background:#eef2f7;opacity:0.7"></div>
<div class="a" style="left:375.6px;top:487px;width:1px;height:14px;background:#8e9bac"></div>
<div class="a" style="left:376.6px;top:487px;width:1px;height:14px;background:#eef2f7;opacity:0.7"></div>
<div class="a" style="left:454.4px;top:487px;width:1px;height:14px;background:#8e9bac"></div>
<div class="a" style="left:455.4px;top:487px;width:1px;height:14px;background:#eef2f7;opacity:0.7"></div>
<div class="a" style="left:483.25px;top:487px;width:1px;height:14px;background:#8e9bac"></div>
<div class="a" style="left:484.25px;top:487px;width:1px;height:14px;background:#eef2f7;opacity:0.7"></div>
<svg class="a" style="left:80.25px;top:494px;overflow:visible" width="6" height="4" viewBox="0 0 6 4"><path d="M0 0.5 H5 L2.5 3.5 Z" fill="#1a1a1a"/></svg>
<svg class="a" style="left:208.75px;top:494px;overflow:visible" width="6" height="4" viewBox="0 0 6 4"><path d="M0 0.5 H5 L2.5 3.5 Z" fill="#1a1a1a"/></svg>
<svg class="a" style="left:428.5px;top:494px;overflow:visible" width="6" height="4" viewBox="0 0 6 4"><path d="M0 0.5 H5 L2.5 3.5 Z" fill="#1a1a1a"/></svg>
<svg class="a" style="left:473.9px;top:494px;overflow:visible" width="6" height="4" viewBox="0 0 6 4"><path d="M0 0.5 H5 L2.5 3.5 Z" fill="#1a1a1a"/></svg>
<div class="a" style="left:529px;top:483px;width:2px;height:21px;background:#a1b1c7"></div>
<div class="a" style="left:711px;top:483px;width:2px;height:21px;background:#a1b1c7"></div>
<div class="a" style="left:521px;top:484px;width:7.5px;height:19px;background:#dde4ee"></div>
<div class="a" style="left:703px;top:484px;width:7.5px;height:19px;background:#dde4ee"></div>
<svg class="a" style="left:522px;top:494px;overflow:visible" width="6" height="7" viewBox="0 0 6 7"><path d="M0.5 0.5 H5.5 M0.5 2 H5.5" stroke="#333" stroke-width="0.8"/><path d="M0.5 4 H5.5 L3 6.5 Z" fill="#222"/></svg>
<svg class="a" style="left:704px;top:494px;overflow:visible" width="6" height="7" viewBox="0 0 6 7"><path d="M0.5 0.5 H5.5 M0.5 2 H5.5" stroke="#333" stroke-width="0.8"/><path d="M0.5 4 H5.5 L3 6.5 Z" fill="#222"/></svg>
<svg class="a" style="left:787.5px;top:494px;overflow:visible" width="6" height="7" viewBox="0 0 6 7"><path d="M0.5 0.5 H5.5 M0.5 2 H5.5" stroke="#333" stroke-width="0.8"/><path d="M0.5 4 H5.5 L3 6.5 Z" fill="#222"/></svg>
<div class="a" style="left:536.4px;top:486.4px;width:15.6px;height:15.6px;background:linear-gradient(180deg,#fff3cf,#fbe3a6);border:1px solid #e8c874;box-sizing:border-box"></div>
<svg class="a" style="left:16px;top:489px;overflow:visible" width="13" height="13" viewBox="0 0 13 13"><rect x="0.5" y="0.5" width="11" height="10.5" fill="#fbfbf3" stroke="#8a9ab8"/><rect x="1" y="1" width="10" height="1.5" fill="#7f9fd8"/><path d="M3 6 Q3.5 3.5 6 3.5 Q8 3.5 8.8 5.2 M9 6.5 Q8.5 9 6 9 Q4 9 3.2 7.3" stroke="#e8b800" stroke-width="1.4" fill="none"/></svg>
<svg class="a" style="left:32px;top:489px;overflow:visible" width="13" height="13" viewBox="0 0 13 13"><rect x="0.5" y="0.5" width="11" height="8.5" fill="#f5f5f5" stroke="#222"/><rect x="1" y="1" width="10" height="1.5" fill="#335"/><path d="M5 7.5 H9 V5.5 L12.5 8.5 L9 11.5 V9.5 H5 Z" fill="#1ec8e8" stroke="#0a7080" stroke-width="0.5"/></svg>
<svg class="a" style="left:48.5px;top:489px;overflow:visible" width="13" height="13" viewBox="0 0 13 13"><path d="M4 4 L12 11.5" stroke="#111" stroke-width="1.7"/><path d="M2.5 5 L5.5 7 M1 8 L4 10" stroke="#e8d000" stroke-width="2.2"/><circle cx="6" cy="1.5" r="1.3" fill="#e8d000"/></svg>
<svg class="a" style="left:65.5px;top:489px;overflow:visible" width="13" height="13" viewBox="0 0 13 13"><rect x="0.5" y="0.5" width="11" height="9" fill="#fafafa" stroke="#223"/><rect x="1" y="1" width="10" height="1.5" fill="#335"/><circle cx="6.5" cy="6" r="2.5" fill="#f0c030" stroke="#222" stroke-width="0.8"/><path d="M4.8 7.8 L1.5 11.5" stroke="#c02020" stroke-width="1.3"/></svg>
<svg class="a" style="left:95.5px;top:489px;overflow:visible" width="13" height="13" viewBox="0 0 13 13"><path d="M0.5 5 L4.5 1 L11.5 7 L7.5 11 Z" fill="#e9e080" stroke="#111" stroke-width="0.9"/><path d="M0.5 5 L4.5 1 L6.5 2.8 L2.5 6.8 Z" fill="#111"/></svg>
<svg class="a" style="left:111px;top:489px;overflow:visible" width="13" height="13" viewBox="0 0 13 13"><circle cx="4" cy="4.2" r="2.6" fill="#ffeb00" stroke="#222" stroke-width="0.6"/><circle cx="9.2" cy="4.2" r="2.6" fill="#ffeb00" stroke="#222" stroke-width="0.6"/><circle cx="4" cy="9.2" r="2.6" fill="#ffeb00" stroke="#222" stroke-width="0.6"/><circle cx="9.2" cy="9.2" r="2.6" fill="#ffeb00" stroke="#222" stroke-width="0.6"/><path d="M0 2 H4 M2 0 V4" stroke="#111" stroke-width="1.2"/></svg>
<svg class="a" style="left:127.5px;top:489px;overflow:visible" width="13" height="13" viewBox="0 0 13 13"><path d="M0 6 H5 M2.5 3.5 V8.5" stroke="#111" stroke-width="1.4"/><path d="M5 6 H7" stroke="#111"/><circle cx="9.8" cy="6" r="2.7" fill="#ffeb00" stroke="#222" stroke-width="0.6"/></svg>
<svg class="a" style="left:144px;top:489px;overflow:visible" width="13" height="13" viewBox="0 0 13 13"><path d="M3.5 3 Q3.5 0.5 6 0.5 Q8.5 0.5 8.5 3 Q8.5 4.5 6 5.5 V7" stroke="#222" stroke-width="1.3" fill="none"/><circle cx="2.5" cy="10" r="2" fill="none" stroke="#222" stroke-width="1.1"/><circle cx="9.5" cy="10" r="2" fill="none" stroke="#222" stroke-width="1.1"/><path d="M4.5 10 H7.5" stroke="#222"/></svg>
<svg class="a" style="left:160px;top:489px;overflow:visible" width="13" height="13" viewBox="0 0 13 13"><rect x="2" y="2" width="9" height="9" fill="#a9b4ff" stroke="#2030d0" stroke-width="1"/><path d="M2 2 L11 11 M11 2 L2 11" stroke="#2030d0"/><g fill="none" stroke="#333" stroke-width="0.9"><circle cx="2" cy="2" r="1.6"/><circle cx="11" cy="2" r="1.6"/><circle cx="2" cy="11" r="1.6"/><circle cx="11" cy="11" r="1.6"/></g></svg>
<svg class="a" style="left:177.5px;top:489px;overflow:visible" width="13" height="13" viewBox="0 0 13 13"><path d="M4 1 H7 V5 L9 3.5 L5.5 7.5 L2 3.5 L4 5 Z" fill="#d0d4da" stroke="#a8adb5" stroke-width="0.6"/><circle cx="2.5" cy="10" r="2" fill="none" stroke="#a8adb5"/><circle cx="9" cy="10" r="2" fill="none" stroke="#a8adb5"/></svg>
<svg class="a" style="left:193.5px;top:489px;overflow:visible" width="13" height="13" viewBox="0 0 13 13"><circle cx="6" cy="6" r="5.3" fill="#ecefe0" stroke="#555" stroke-width="0.7" stroke-dasharray="1 1"/><circle cx="6" cy="6" r="3.3" fill="#6e6a10" stroke="#222" stroke-width="0.6"/></svg>
<svg class="a" style="left:222.5px;top:489px;overflow:visible" width="13" height="13" viewBox="0 0 13 13"><path d="M3.5 1 H9.5 L12.5 6 L9.5 11 H3.5 L0.5 6 Z" fill="none" stroke="#1a20e0" stroke-width="1.6"/></svg>
<svg class="a" style="left:239px;top:489px;overflow:visible" width="13" height="13" viewBox="0 0 13 13"><path d="M3.5 1 H9.5 L12 6 L9.5 11 H3.5 L1 6 Z" fill="none" stroke="#e8e030" stroke-width="1.6"/><path d="M3.5 1 L1 6 L3.5 11 H6" fill="none" stroke="#1a20e0" stroke-width="1.6"/></svg>
<svg class="a" style="left:256px;top:489px;overflow:visible" width="13" height="13" viewBox="0 0 13 13"><path d="M3 1 H8 L10.5 3.5 L8 6 H3 L0.5 3.5 Z" fill="none" stroke="#5060a0" stroke-width="1.1"/><path d="M4 5.5 H9 L11.5 8 L9 10.5 H4 L1.5 8 Z" fill="none" stroke="#3040c0" stroke-width="1.1"/><rect x="0.5" y="4" width="3" height="6" fill="#c0c4cc"/></svg>
<svg class="a" style="left:273px;top:489px;overflow:visible" width="13" height="13" viewBox="0 0 13 13"><g stroke="#1a2ad0" stroke-width="1.5"><path d="M1 1 L11 11 M11 1 L1 11 M6 1 L1 6 L6 11 L11 6 Z" fill="none"/></g><path d="M4 4 L8 8 M8 4 L4 8" stroke="#111" stroke-width="1.3"/></svg>
<svg class="a" style="left:289.5px;top:489px;overflow:visible" width="13" height="13" viewBox="0 0 13 13"><g stroke="#111" stroke-width="1.5"><path d="M1 1 L11 11 M11 1 L1 11" fill="none"/></g><g fill="#e02020"><circle cx="1.5" cy="1.5" r="1.2"/><circle cx="10.5" cy="1.5" r="1.2"/><circle cx="1.5" cy="10.5" r="1.2"/><circle cx="10.5" cy="10.5" r="1.2"/><circle cx="6" cy="1.5" r="1"/><circle cx="6" cy="10.5" r="1"/><circle cx="1.5" cy="6" r="1"/><circle cx="10.5" cy="6" r="1"/></g></svg>
<svg class="a" style="left:309.5px;top:489px;overflow:visible" width="13" height="13" viewBox="0 0 13 13"><path d="M3 10 L9 3" stroke="#2a3a90" stroke-width="1.2"/><circle cx="2.8" cy="9.5" r="2.2" fill="#9ecbf0" stroke="#2a3a90" stroke-width="0.8"/><circle cx="9.5" cy="2.8" r="2.4" fill="#ffe000" stroke="#555" stroke-width="0.5"/></svg>
<svg class="a" style="left:326px;top:489px;overflow:visible" width="13" height="13" viewBox="0 0 13 13"><path d="M3 6 L5 2 H8 L10 6 L8 10 H5 Z M1 1 L3 6 L1 11 M12 1 L10 6 L12 11" fill="none" stroke="#2838c8" stroke-width="1.2"/><g fill="#f0e000"><circle cx="1" cy="1" r="1.2"/><circle cx="12" cy="1" r="1.2"/><circle cx="1" cy="11" r="1.2"/><circle cx="12" cy="11" r="1.2"/></g></svg>
<svg class="a" style="left:343px;top:489px;overflow:visible" width="13" height="13" viewBox="0 0 13 13"><path d="M4 1 H9 L11.5 3.5 L9 6 H4 L1.5 3.5 Z" fill="none" stroke="#d8d060" stroke-width="1.1"/><path d="M3 6.5 H8 L10.5 9 L8 11.5 H3 L0.5 9 Z" fill="none" stroke="#333" stroke-width="1.2"/></svg>
<svg class="a" style="left:360px;top:489px;overflow:visible" width="13" height="13" viewBox="0 0 13 13"><path d="M4 1 H9 L11.5 3.5 L9 6 H4 L1.5 3.5 Z" fill="none" stroke="#9da2a9" stroke-width="1"/><path d="M3 6.5 H8 L10.5 9 L8 11.5 H3 L0.5 9 Z" fill="none" stroke="#9da2a9" stroke-width="1"/></svg>
<svg class="a" style="left:380px;top:489px;overflow:visible" width="13" height="13" viewBox="0 0 13 13"><rect x="0.5" y="0.5" width="9" height="9" fill="#b8c0ff" fill-opacity="0.5" stroke="#2030d0" stroke-width="1.1"/><rect x="2.5" y="2.5" width="9" height="9" fill="none" stroke="#2030d0" stroke-width="1.1"/></svg>
<svg class="a" style="left:397.5px;top:489px;overflow:visible" width="13" height="13" viewBox="0 0 13 13"><path d="M6 0.5 L11.5 6 L6 11.5 L0.5 6 Z" fill="#f2ea00" stroke="#111" stroke-width="1"/><path d="M0.5 6 H11.5 M6 0.5 V11.5" stroke="#111" stroke-width="0.7"/></svg>
<svg class="a" style="left:413.5px;top:489px;overflow:visible" width="13" height="13" viewBox="0 0 13 13"><path d="M1 3 L12 9 M12 3 L1 9 M1 6 H12" stroke="#e02020" stroke-width="1.6"/><path d="M3 5 L9 7 M9 5 L3 7" stroke="#111" stroke-width="1"/></svg>
<svg class="a" style="left:437.5px;top:489px;overflow:visible" width="13" height="13" viewBox="0 0 13 13"><text x="5" y="6" font-family="Liberation Sans" font-weight="bold" font-size="7" fill="#111">Fe</text><path d="M3 9 L6 6" stroke="#333" stroke-width="0.8"/><circle cx="2.7" cy="9.5" r="2.3" fill="#ffeb00" stroke="#333" stroke-width="0.5"/></svg>
<svg class="a" style="left:458.5px;top:489px;overflow:visible" width="13" height="13" viewBox="0 0 13 13"><rect x="0.5" y="0.5" width="11.5" height="11.5" fill="#fff" stroke="#2a30c0"/><g fill="#111"><path d="M6.25 1 L8.5 4 H4 Z"/><path d="M6.25 11.5 L8.5 8.5 H4 Z"/><path d="M1 6.25 L4 4 V8.5 Z"/><path d="M11.5 6.25 L8.5 4 V8.5 Z"/></g><circle cx="6.25" cy="6.25" r="2.2" fill="#f5ee20"/></svg>
<svg class="a" style="left:489px;top:489px;overflow:visible" width="13" height="13" viewBox="0 0 13 13"><text x="-0.5" y="10.5" font-family="Liberation Serif" font-weight="bold" font-style="italic" font-size="12.5" fill="#1830b0">M</text></svg>
<svg class="a" style="left:505px;top:489px;overflow:visible" width="13" height="13" viewBox="0 0 13 13"><rect x="0.5" y="0.5" width="11" height="11" fill="#dfe3ef" stroke="#3a4fa8"/><circle cx="5.5" cy="6" r="3.2" fill="#e05050"/><circle cx="7" cy="6.5" r="3" fill="#159a8a"/></svg>
<svg class="a" style="left:538.5px;top:489px;overflow:visible" width="13" height="13" viewBox="0 0 13 13"><path d="M1.5 0.5 V10 L4 7.5 L6 11.5 L7.5 10.8 L5.6 7 H8.6 Z" fill="#fafafa" stroke="#222" stroke-width="0.9"/></svg>
<svg class="a" style="left:555px;top:489px;overflow:visible" width="13" height="13" viewBox="0 0 13 13"><path d="M6 0 L8.5 3 H3.5 Z M6 12 L8.5 9 H3.5 Z M0 6 L3 3.5 V8.5 Z M12 6 L9 3.5 V8.5 Z" fill="#111"/><rect x="3" y="3" width="6" height="6" fill="none" stroke="#111" stroke-width="1.4"/><path d="M6 3 V9 M3 6 H9" stroke="#111" stroke-width="0.8"/></svg>
<svg class="a" style="left:572px;top:489px;overflow:visible" width="13" height="13" viewBox="0 0 13 13"><path d="M9.5 4 A4.3 4.3 0 1 0 10 8" stroke="#111" stroke-width="1.8" fill="none"/><path d="M7 1 L11 1.5 L10 5.5 Z" fill="#111"/></svg>
<svg class="a" style="left:588.5px;top:489px;overflow:visible" width="13" height="13" viewBox="0 0 13 13"><path d="M6 0.5 L9 3.5 H3 Z M6 11.5 L9 8.5 H3 Z M0.5 6 L3.5 3 V9 Z M11.5 6 L8.5 3 V9 Z" fill="#111"/><path d="M6 3 V9 M3 6 H9" stroke="#111" stroke-width="1.8"/></svg>
<svg class="a" style="left:604.5px;top:489px;overflow:visible" width="13" height="13" viewBox="0 0 13 13"><path d="M0.5 3.5 V0.5 H3.5 M8 0.5 H11 V3.5 M11 8 V11 H8 M3.5 11 H0.5 V8" stroke="#111" stroke-width="1.4" fill="none"/><circle cx="5.8" cy="5.8" r="2" fill="none" stroke="#111" stroke-width="1.4"/></svg>
<svg class="a" style="left:620.5px;top:489px;overflow:visible" width="13" height="13" viewBox="0 0 13 13"><path d="M11 1.5 L1 6 L11 10.5" stroke="#111" stroke-width="1.6" fill="none"/><path d="M8 4.5 Q9.5 6 8 7.5" stroke="#111" stroke-width="1.1" fill="none"/></svg>
<svg class="a" style="left:637.5px;top:489px;overflow:visible" width="13" height="13" viewBox="0 0 13 13"><path d="M1 5 L6 1.5 L11 5" stroke="#111" stroke-width="1.5" fill="none"/><path d="M3.5 11 L5.5 5.5 H6.5 L8.5 11" stroke="#111" stroke-width="1.5" fill="none"/><path d="M1 11.5 H11" stroke="#111" stroke-width="1.2"/></svg>
<svg class="a" style="left:654.5px;top:489px;overflow:visible" width="13" height="13" viewBox="0 0 13 13"><circle cx="6.5" cy="6.5" r="3.2" fill="none" stroke="#111" stroke-width="1.6"/><g fill="#111"><circle cx="1" cy="4" r="0.8"/><circle cx="1" cy="8" r="0.8"/><circle cx="4" cy="11.5" r="0.8"/><circle cx="8" cy="11.5" r="0.8"/><circle cx="11.5" cy="3" r="0.8"/><circle cx="4" cy="1" r="0.8"/></g><path d="M6.5 3 Q10 2 11 5" stroke="#111" stroke-width="1" fill="none"/></svg>
<svg class="a" style="left:670px;top:489px;overflow:visible" width="13" height="13" viewBox="0 0 13 13"><path d="M1 5 L4 2 H8 V6" stroke="#a2a7ae" stroke-width="1.4" fill="none"/><rect x="6" y="4" width="4.5" height="8" fill="#c6cad0"/><g fill="#a2a7ae"><circle cx="1" cy="9" r="0.8"/><circle cx="3.5" cy="9" r="0.8"/></g></svg>
<svg class="a" style="left:687px;top:489px;overflow:visible" width="13" height="13" viewBox="0 0 13 13"><path d="M1 5 L4 2 H8 V6" stroke="#a2a7ae" stroke-width="1.4" fill="none"/><rect x="5" y="5" width="7" height="7" fill="#9ea3aa"/><g fill="#a2a7ae"><circle cx="1" cy="9" r="0.8"/><circle cx="3.5" cy="9" r="0.8"/></g></svg>
<svg class="a" style="left:720.5px;top:489px;overflow:visible" width="13" height="13" viewBox="0 0 13 13"><path d="M1 0.5 V11 H11.5 M3.5 3 V11 M5.8 4 V11 M8 3 V11 M10.3 4 V11" stroke="#222" stroke-width="1.1" fill="none"/></svg>
<svg class="a" style="left:737.5px;top:489px;overflow:visible" width="13" height="13" viewBox="0 0 13 13"><path d="M5.5 0.5 L10.5 11 H0.5 Z" fill="none" stroke="#111" stroke-width="1.1"/><path d="M4.5 0.5 H6.5" stroke="#111"/></svg>
<svg class="a" style="left:754px;top:489px;overflow:visible" width="13" height="13" viewBox="0 0 13 13"><circle cx="4" cy="8" r="3" fill="#fff" stroke="#111" stroke-width="1.2"/><path d="M5.5 5 L10.5 0.5 M3 5 V0.5" stroke="#111" stroke-width="1.4"/></svg>
<svg class="a" style="left:770.5px;top:489px;overflow:visible" width="13" height="13" viewBox="0 0 13 13"><path d="M1 6 L6 2 H11 L11.5 5 L6 10 H1.5 Z" fill="#fff" stroke="#111" stroke-width="1"/><path d="M6 2 L6 10 M6 6 L11.5 5" stroke="#111" stroke-width="0.7"/></svg>
<div class="a" style="left:534px;top:488px;width:2px;height:2px;background:#6e7b8c"></div>
<div class="a" style="left:534px;top:491px;width:2px;height:2px;background:#6e7b8c"></div>
<div class="a" style="left:534px;top:494px;width:2px;height:2px;background:#6e7b8c"></div>
<div class="a" style="left:534px;top:497px;width:2px;height:2px;background:#6e7b8c"></div>
<div class="a" style="left:716px;top:488px;width:2px;height:2px;background:#6e7b8c"></div>
<div class="a" style="left:716px;top:491px;width:2px;height:2px;background:#6e7b8c"></div>
<div class="a" style="left:716px;top:494px;width:2px;height:2px;background:#6e7b8c"></div>
<div class="a" style="left:716px;top:497px;width:2px;height:2px;background:#6e7b8c"></div>
<svg class="a" style="left:14px;top:23.5px;overflow:visible" width="13" height="13" viewBox="0 0 13 13"><path d="M2 1.5 H8 L10 3.5 V11.5 H2 Z" fill="#fff7b0" stroke="#6a6a40" stroke-width="0.8"/><circle cx="3" cy="3" r="2.6" fill="#fff36a" opacity="0.9"/><circle cx="5.5" cy="7.5" r="2.6" fill="#2aa84a"/><path d="M9 4.5 L12.5 7.5 L9 10.5 Z" fill="#111"/><path d="M3 9 H7" stroke="#3050a0" stroke-width="1"/></svg>
<div class="t" id="t0" style="left:22.50px;top:6.28px;font-size:9px;color:#111;transform:scaleX(0.9853);">Diamond</div>
<div class="t" id="t1" style="left:31.40px;top:26.20px;font-size:9.8px;color:#1b2535;transform:scaleX(0.8863);">File</div>
<div class="t" id="t2" style="left:57.00px;top:26.20px;font-size:9.8px;color:#1b2535;transform:scaleX(0.8881);">Edit</div>
<div class="t" id="t3" style="left:83.70px;top:26.20px;font-size:9.8px;color:#1b2535;transform:scaleX(0.9021);">View</div>
<div class="t" id="t4" style="left:114.30px;top:26.20px;font-size:9.8px;color:#1b2535;transform:scaleX(0.9233);">Structure</div>
<div class="t" id="t5" style="left:162.30px;top:26.20px;font-size:9.8px;color:#1b2535;transform:scaleX(0.9311);">Picture</div>
<div class="t" id="t6" style="left:202.00px;top:26.20px;font-size:9.8px;color:#1b2535;transform:scaleX(0.9313);">Build</div>
<div class="t" id="t7" style="left:234.70px;top:26.20px;font-size:9.8px;color:#1b2535;transform:scaleX(0.9121);">Objects</div>
<div class="t" id="t8" style="left:276.30px;top:26.20px;font-size:9.8px;color:#1b2535;transform:scaleX(0.9471);">Move</div>
<div class="t" id="t9" style="left:311.00px;top:26.20px;font-size:9.8px;color:#1b2535;transform:scaleX(0.9749);">Tools</div>
<div class="t" id="t10" style="left:345.00px;top:26.20px;font-size:9.8px;color:#1b2535;transform:scaleX(0.9553);">Window</div>
<div class="t" id="t11" style="left:390.00px;top:26.20px;font-size:9.8px;color:#1b2535;transform:scaleX(0.9079);">Help</div>
<div class="t" id="t12" style="left:61.80px;top:63.64px;font-size:10px;color:#8d8d8d;transform:scaleX(0.8610);">No.</div>
<div class="t" id="t13" style="left:78.00px;top:63.64px;font-size:10px;color:#1a1a1a;transform:scaleX(0.6292);">1</div>
<div class="t" id="t14" style="left:92.00px;top:63.64px;font-size:10px;color:#8d8d8d;transform:scaleX(0.8904);">Title</div>
<div class="t" id="t15" style="left:110.80px;top:63.64px;font-size:10px;color:#1a1a1a;transform:scaleX(0.8013);">9013529</div>
<div class="t" id="t16" style="left:151.75px;top:63.64px;font-size:10px;color:#8d8d8d;transform:scaleX(0.7669);">Pics</div>
<div class="t" id="t17" style="left:169.00px;top:63.64px;font-size:10px;color:#1a1a1a;transform:scaleX(0.6292);">1</div>
<div class="t" id="t18" style="left:183.00px;top:63.64px;font-size:10px;color:#8d8d8d;transform:scaleX(0.8366);">Code</div>
<div class="t" id="t19" style="left:205.50px;top:63.64px;font-size:10px;color:#1a1a1a;transform:scaleX(0.8090);">9013529</div>
<div class="t" id="t20" style="left:247.00px;top:63.64px;font-size:10px;color:#8d8d8d;transform:scaleX(0.8867);">Formula sum</div>
<div class="t" id="t21" style="left:301.75px;top:63.64px;font-size:10px;color:#1a1a1a;transform:scaleX(0.7869);">Fe3 O4</div>
<div class="t" id="t22" style="left:337.50px;top:63.64px;font-size:10px;color:#8d8d8d;transform:scaleX(0.9097);">HM symbol</div>
<div class="t" id="t23" style="left:386.25px;top:63.64px;font-size:10px;color:#1a1a1a;font-weight:bold;transform:scaleX(0.8606);">F d -3 m</div>
<div class="t" id="t24" style="left:428.00px;top:63.64px;font-size:10px;color:#8d8d8d;transform:scaleX(0.8016);">SGR no.</div>
<div class="t" id="t25" style="left:461.25px;top:63.64px;font-size:10px;color:#1a1a1a;transform:scaleX(0.7790);">227</div>
<div class="t" id="t26" style="left:483.75px;top:63.64px;font-size:10px;color:#8d8d8d;transform:scaleX(0.8676);">Cell parameters</div>
<div class="t" id="t27" style="left:547.00px;top:63.64px;font-size:10px;color:#1a1a1a;transform:scaleX(0.8107);">8.397,8.397,8.397,90.00,90.00,90.00</div>
<div class="t" id="t28" style="left:18.52px;top:76.70px;font-size:9.5px;color:#e3e8f1;transform:rotate(90deg) scaleX(0.9561);">Auto Picture Creator</div>
<div class="t" id="t29" style="left:18.52px;top:189.70px;font-size:9.5px;color:#e3e8f1;transform:rotate(90deg) scaleX(0.9668);">Navigation</div>
<div class="t" id="t30" style="left:18.52px;top:255.00px;font-size:9.5px;color:#e3e8f1;transform:rotate(90deg) scaleX(0.9543);">Recent Pictures</div>
<div class="t" id="t31" style="left:18.52px;top:339.70px;font-size:9.5px;color:#e3e8f1;transform:rotate(90deg) scaleX(0.9558);">Undo Buffer</div>
<div class="t" id="t32" style="left:63.00px;top:88.23px;font-size:10px;color:#1a1a1a;transform:scaleX(0.7753);">Picture 1</div>
<div class="t" id="t33" style="left:465.80px;top:86.94px;font-size:10px;color:#1a1a1a;transform:scaleX(0.8956);">Table of polyhedra</div>
<div class="t" id="t34" style="left:465.80px;top:104.64px;font-size:10px;color:#1e1e1e;transform:scaleX(0.8698);">Poly. no.</div>
<div class="t" id="t35" style="left:541.50px;top:104.64px;font-size:10px;color:#1e1e1e;transform:scaleX(0.9368);">Atom no.</div>
<div class="t" id="t36" style="left:588.30px;top:104.64px;font-size:10px;color:#1e1e1e;transform:scaleX(0.8753);">Symbol</div>
<div class="t" id="t37" style="left:635.60px;top:104.64px;font-size:10px;color:#1e1e1e;transform:scaleX(0.8792);">Ligands</div>
<div class="t" id="t38" style="left:691.00px;top:104.64px;font-size:10px;color:#1e1e1e;transform:scaleX(0.7894);">Faces</div>
<div class="t" id="t39" style="left:726.70px;top:104.64px;font-size:10px;color:#1e1e1e;transform:scaleX(0.9124);">Dmin</div>
<div class="t" id="t40" style="left:771.40px;top:104.64px;font-size:10px;color:#1e1e1e;transform:scaleX(0.8612);">Dmax</div>
<div class="t" id="t41" style="left:466.00px;top:118.83px;font-size:10px;color:#1e1e1e;transform:scaleX(0.9300);">1</div>
<div class="t" id="t42" style="left:573.83px;top:118.83px;font-size:10px;color:#1e1e1e;transform:scaleX(0.9300);">5</div>
<div class="t" id="t43" style="left:588.30px;top:118.83px;font-size:10px;color:#1e1e1e;transform:scaleX(0.9300);">FeM</div>
<div class="t" id="t44" style="left:661.23px;top:118.83px;font-size:10px;color:#1e1e1e;transform:scaleX(0.9300);">8</div>
<div class="t" id="t45" style="left:707.33px;top:118.83px;font-size:10px;color:#1e1e1e;transform:scaleX(0.9300);">6</div>
<div class="t" id="t46" style="left:724.72px;top:118.83px;font-size:10px;color:#1e1e1e;transform:scaleX(0.9300);">1.718</div>
<div class="t" id="t47" style="left:770.62px;top:118.83px;font-size:10px;color:#1e1e1e;transform:scaleX(0.9300);">1.809</div>
<div class="t" id="t48" style="left:465.80px;top:137.23px;font-size:10px;color:#1a1a1a;transform:scaleX(0.8886);">Properties</div>
<div class="t" id="t49" style="left:465.80px;top:152.63px;font-size:10px;color:#1a1a1a;transform:scaleX(0.7842);">Dirichlet domain (Voronoi polyhedron)</div>
<div class="t" id="t50" style="left:465.30px;top:186.37px;font-size:9.6px;color:#151515;transform:scaleX(0.9411);">Central atom:</div>
<div class="t" id="t51" style="left:581.00px;top:186.37px;font-size:9.6px;color:#151515;transform:scaleX(0.9389);">"FeM" : 1/2, 1/2, 1/2</div>
<div class="t" id="t52" style="left:465.30px;top:200.62px;font-size:9.6px;color:#151515;transform:scaleX(0.9325);">Direct neighbours:</div>
<div class="t" id="t53" style="left:581.00px;top:200.62px;font-size:9.6px;color:#151515;transform:scaleX(0.8900);">6: ...</div>
<div class="t" id="t54" style="left:794.30px;top:200.62px;font-size:9.6px;color:#151515;transform:scaleX(0.8655);">2.05998..2.05998 Å</div>
<div class="t" id="t55" style="left:465.30px;top:214.87px;font-size:9.6px;color:#151515;transform:scaleX(0.9634);">Half-direct neighbours:</div>
<div class="t" id="t56" style="left:581.00px;top:214.87px;font-size:9.6px;color:#151515;transform:scaleX(0.8900);">0</div>
<div class="t" id="t57" style="left:465.30px;top:229.12px;font-size:9.6px;color:#151515;transform:scaleX(0.9494);">Indirect neighbours:</div>
<div class="t" id="t58" style="left:581.00px;top:229.12px;font-size:9.6px;color:#151515;transform:scaleX(0.8900);">0</div>
<div class="t" id="t59" style="left:465.30px;top:243.37px;font-size:9.6px;color:#151515;transform:scaleX(0.9257);">Radius of spherical domain:</div>
<div class="t" id="t60" style="left:581.00px;top:243.37px;font-size:9.6px;color:#151515;transform:scaleX(0.8853);">Rsd=1.27887 Å (V=8.76125 Å**3)</div>
<div class="t" id="t61" style="left:465.30px;top:257.62px;font-size:9.6px;color:#151515;transform:scaleX(0.9341);">6 neighbour(s)</div>
<div class="t" id="t62" style="left:581.00px;top:257.62px;font-size:9.6px;color:#151515;transform:scaleX(0.9604);">Atom (x/a, y/b, z/c)</div>
<div class="t" id="t63" style="left:794.30px;top:257.62px;font-size:9.6px;color:#151515;transform:scaleX(0.9520);">Dist. from center</div>
<div class="t" id="t64" style="left:887.00px;top:257.62px;font-size:9.6px;color:#151515;transform:scaleX(0.9290);">Solid angle-%</div>
<div class="t" id="t65" style="left:469.50px;top:271.87px;font-size:9.6px;color:#151515;transform:scaleX(0.9215);">1:</div>
<div class="t" id="t66" style="left:581.00px;top:271.87px;font-size:9.6px;color:#151515;transform:scaleX(0.8900);">"O" (1-y, 1/4+x, 1/4+z) : 0.74524, 0.50476, 0.50476</div>
<div class="t" id="t67" style="left:794.30px;top:271.87px;font-size:9.6px;color:#151515;transform:scaleX(0.8860);">2.05998 Å : &lt;4&gt;</div>
<div class="t" id="t68" style="left:887.00px;top:271.87px;font-size:9.6px;color:#151515;transform:scaleX(0.8360);">16.6667</div>
<div class="t" id="t69" style="left:469.50px;top:286.12px;font-size:9.6px;color:#151515;transform:scaleX(0.9215);">2:</div>
<div class="t" id="t70" style="left:581.00px;top:286.12px;font-size:9.6px;color:#151515;transform:scaleX(0.8900);">"O" (1/4+y, 1-x, 1/4+z) : 0.50476, 0.74524, 0.50476</div>
<div class="t" id="t71" style="left:794.30px;top:286.12px;font-size:9.6px;color:#151515;transform:scaleX(0.8860);">2.05998 Å : &lt;4&gt;</div>
<div class="t" id="t72" style="left:887.00px;top:286.12px;font-size:9.6px;color:#151515;transform:scaleX(0.8360);">16.6667</div>
<div class="t" id="t73" style="left:469.50px;top:300.37px;font-size:9.6px;color:#151515;transform:scaleX(0.9215);">3:</div>
<div class="t" id="t74" style="left:581.00px;top:300.37px;font-size:9.6px;color:#151515;transform:scaleX(0.8900);">"O" (1/4+x, 1/4+z, 1-y) : 0.50476, 0.50476, 0.74524</div>
<div class="t" id="t75" style="left:794.30px;top:300.37px;font-size:9.6px;color:#151515;transform:scaleX(0.8860);">2.05998 Å : &lt;4&gt;</div>
<div class="t" id="t76" style="left:887.00px;top:300.37px;font-size:9.6px;color:#151515;transform:scaleX(0.8360);">16.6667</div>
<div class="t" id="t77" style="left:469.50px;top:314.62px;font-size:9.6px;color:#151515;transform:scaleX(0.9215);">4:</div>
<div class="t" id="t78" style="left:581.00px;top:314.62px;font-size:9.6px;color:#151515;transform:scaleX(0.8900);">"O" (3/4-x, y, 3/4-z) : 0.49524, 0.25476, 0.49524</div>
<div class="t" id="t79" style="left:794.30px;top:314.62px;font-size:9.6px;color:#151515;transform:scaleX(0.8860);">2.05998 Å : &lt;4&gt;</div>
<div class="t" id="t80" style="left:887.00px;top:314.62px;font-size:9.6px;color:#151515;transform:scaleX(0.8360);">16.6667</div>
<div class="t" id="t81" style="left:469.50px;top:328.87px;font-size:9.6px;color:#151515;transform:scaleX(0.9215);">5:</div>
<div class="t" id="t82" style="left:581.00px;top:328.87px;font-size:9.6px;color:#151515;transform:scaleX(0.8900);">"O" (3/4-x, 3/4-y, z) : 0.49524, 0.49524, 0.25476</div>
<div class="t" id="t83" style="left:794.30px;top:328.87px;font-size:9.6px;color:#151515;transform:scaleX(0.8860);">2.05998 Å : &lt;4&gt;</div>
<div class="t" id="t84" style="left:887.00px;top:328.87px;font-size:9.6px;color:#151515;transform:scaleX(0.8360);">16.6667</div>
<div class="t" id="t85" style="left:469.50px;top:343.12px;font-size:9.6px;color:#151515;transform:scaleX(0.9215);">6:</div>
<div class="t" id="t86" style="left:581.00px;top:343.12px;font-size:9.6px;color:#151515;transform:scaleX(0.8900);">"O" (x, 3/4-y, 3/4-z) : 0.25476, 0.49524, 0.49524</div>
<div class="t" id="t87" style="left:794.30px;top:343.12px;font-size:9.6px;color:#151515;transform:scaleX(0.8860);">2.05998 Å : &lt;4&gt;</div>
<div class="t" id="t88" style="left:887.00px;top:343.12px;font-size:9.6px;color:#151515;transform:scaleX(0.8360);">16.6667</div>
<div class="t" id="t89" style="left:465.30px;top:357.37px;font-size:9.6px;color:#151515;transform:scaleX(0.9059);">8 vertices</div>
<div class="t" id="t90" style="left:581.00px;top:357.37px;font-size:9.6px;color:#151515;transform:scaleX(0.9209);">Cartesian coordinates rel. to center</div>
<div class="t" id="t91" style="left:794.30px;top:357.37px;font-size:9.6px;color:#151515;transform:scaleX(0.9520);">Dist. from center</div>
<div class="t" id="t92" style="left:471.50px;top:371.62px;font-size:9.6px;color:#151515;transform:scaleX(0.9215);">1:</div>
<div class="t" id="t93" style="left:581.00px;top:371.62px;font-size:9.6px;color:#151515;transform:scaleX(0.8457);">0.99188, 0.99188, 0.99188</div>
<div class="t" id="t94" style="left:794.30px;top:371.62px;font-size:9.6px;color:#151515;transform:scaleX(0.8869);">1.71798 Å</div>
<div class="t" id="t95" style="left:471.50px;top:385.87px;font-size:9.6px;color:#151515;transform:scaleX(0.9215);">2:</div>
<div class="t" id="t96" style="left:581.00px;top:385.87px;font-size:9.6px;color:#151515;transform:scaleX(0.8612);">-1.07041, 1.03114, 1.03114</div>
<div class="t" id="t97" style="left:794.30px;top:385.87px;font-size:9.6px;color:#151515;transform:scaleX(0.8869);">1.80894 Å</div>
<div class="t" id="t98" style="left:471.50px;top:400.12px;font-size:9.6px;color:#151515;transform:scaleX(0.9215);">3:</div>
<div class="t" id="t99" style="left:581.00px;top:400.12px;font-size:9.6px;color:#151515;transform:scaleX(0.8612);">1.03114, -1.07041, 1.03114</div>
<div class="t" id="t100" style="left:794.30px;top:400.12px;font-size:9.6px;color:#151515;transform:scaleX(0.8869);">1.80894 Å</div>
<div class="t" id="t101" style="left:471.50px;top:414.37px;font-size:9.6px;color:#151515;transform:scaleX(0.9215);">4:</div>
<div class="t" id="t102" style="left:581.00px;top:414.37px;font-size:9.6px;color:#151515;transform:scaleX(0.8674);">-1.03114, -1.03114, 1.07041</div>
<div class="t" id="t103" style="left:794.30px;top:414.37px;font-size:9.6px;color:#151515;transform:scaleX(0.8869);">1.80894 Å</div>
<div class="t" id="t104" style="left:471.50px;top:428.62px;font-size:9.6px;color:#151515;transform:scaleX(0.9215);">5:</div>
<div class="t" id="t105" style="left:581.00px;top:428.62px;font-size:9.6px;color:#151515;transform:scaleX(0.8612);">1.03114, 1.03114, -1.07041</div>
<div class="t" id="t106" style="left:794.30px;top:428.62px;font-size:9.6px;color:#151515;transform:scaleX(0.8869);">1.80894 Å</div>
<div class="t" id="t107" style="left:471.50px;top:442.87px;font-size:9.6px;color:#151515;transform:scaleX(0.9215);">6:</div>
<div class="t" id="t108" style="left:581.00px;top:442.87px;font-size:9.6px;color:#151515;transform:scaleX(0.8674);">-1.03114, 1.07041, -1.03114</div>
<div class="t" id="t109" style="left:794.30px;top:442.87px;font-size:9.6px;color:#151515;transform:scaleX(0.8869);">1.80894 Å</div>
<div class="t" id="t110" style="left:471.50px;top:457.12px;font-size:9.6px;color:#151515;transform:scaleX(0.9215);">7:</div>
<div class="t" id="t111" style="left:581.00px;top:457.12px;font-size:9.6px;color:#151515;transform:scaleX(0.8381);">1.07041, -1.03114, -1.03114</div>
<div class="t" id="t112" style="left:794.30px;top:457.12px;font-size:9.6px;color:#151515;transform:scaleX(0.8869);">1.80894 Å</div>
<div class="t" id="t113" style="left:471.50px;top:471.37px;font-size:9.6px;color:#151515;transform:scaleX(0.9215);">8:</div>
<div class="t" id="t114" style="left:581.00px;top:471.37px;font-size:9.6px;color:#151515;transform:scaleX(0.8351);">-0.99188, -0.99188, -0.99188</div>
<div class="t" id="t115" style="left:794.30px;top:471.37px;font-size:9.6px;color:#151515;transform:scaleX(0.8869);">1.71798 Å</div>
<div class="t" id="t116" style="left:8.50px;top:508.16px;font-size:9.5px;color:#e2e6ee;transform:scaleX(0.8771);">For Help, press F1</div>
<div class="t" id="t117" style="left:505.60px;top:508.16px;font-size:9.5px;color:#e2e6ee;transform:scaleX(0.8577);">Blar</div>
<div class="t" id="t118" style="left:527.00px;top:508.16px;font-size:9.5px;color:#1a2333;transform:scaleX(0.9303);">Manual</div>
<div class="t" id="t119" style="left:605.00px;top:508.16px;font-size:9.5px;color:#e2e6ee;transform:scaleX(0.8696);">N. 1.8525 cr</div>
<div class="t" id="t120" style="left:688.00px;top:508.16px;font-size:9.5px;color:#e2e6ee;transform:scaleX(0.8739);">3 parms</div>
<div class="t" id="t121" style="left:741.00px;top:508.16px;font-size:9.5px;color:#e8e080;transform:scaleX(0.9462);">1/7 at.</div>
<div class="t" id="t122" style="left:795.00px;top:508.16px;font-size:9.5px;color:#e2e6ee;transform:scaleX(0.9168);">6 bonds</div>
<div class="t" id="t123" style="left:849.00px;top:508.16px;font-size:9.5px;color:#e2e6ee;transform:scaleX(0.9347);">polymeric</div>
<div class="t" id="t124" style="left:896.00px;top:508.16px;font-size:9.5px;color:#e2e6ee;transform:scaleX(0.9315);">1 polyh.</div>
</body></html>
